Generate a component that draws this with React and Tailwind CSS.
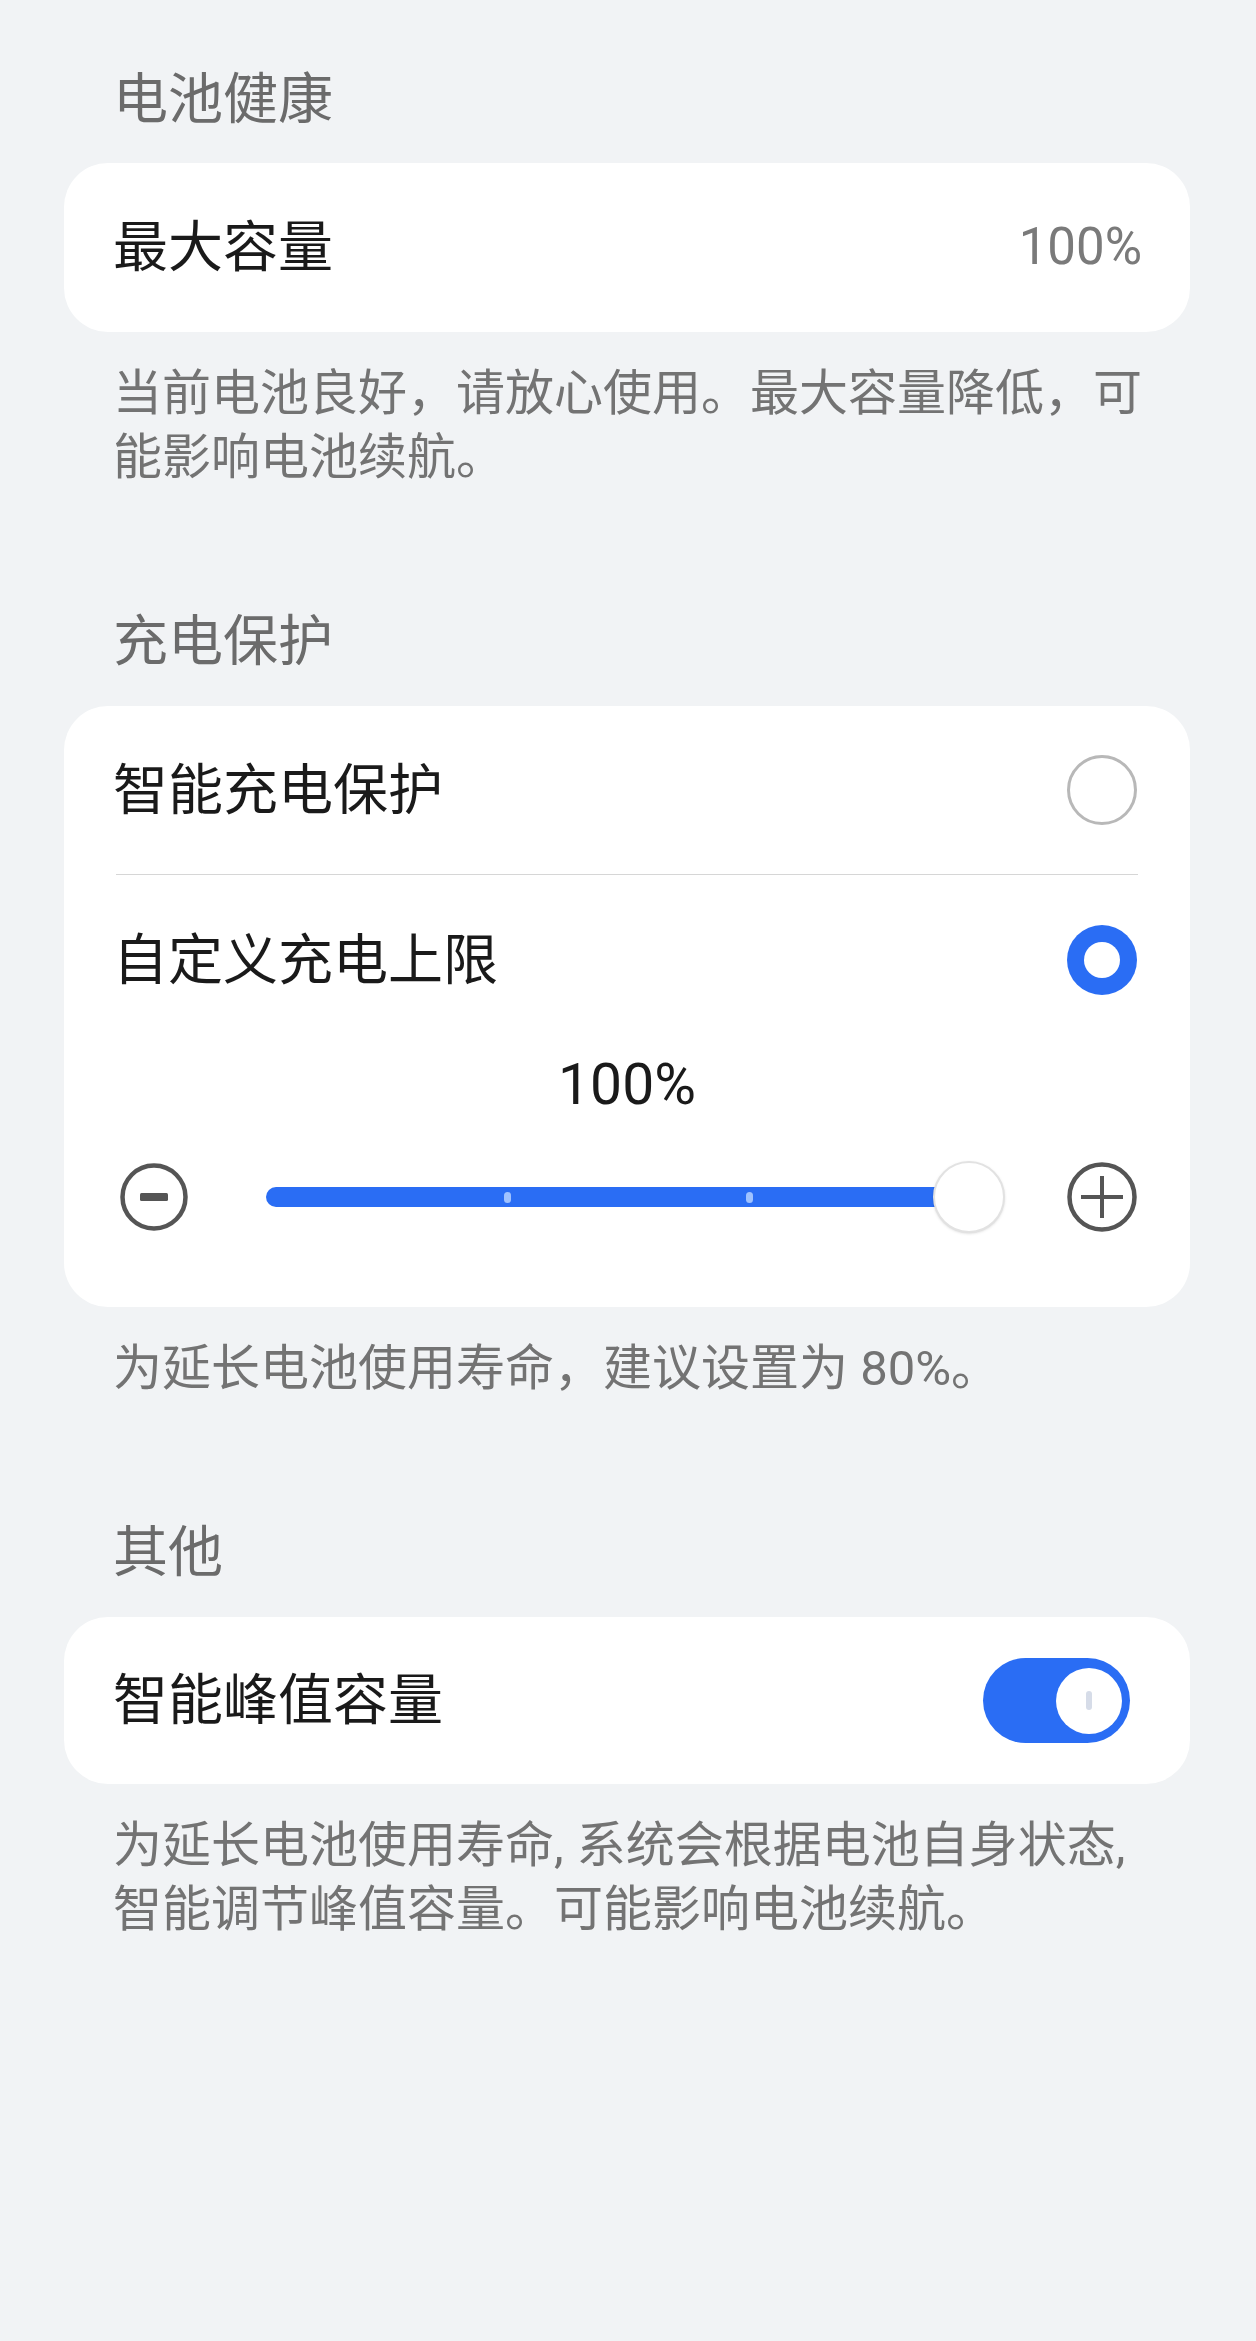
import React from 'react';

const FONT = { fontFamily: 'Roboto, "Noto Sans CJK SC", sans-serif' };

function SectionHeader({ children, className = '' }) {
  return (
    <div className={`h-[82px] flex items-center pl-[49px] text-[55px] text-[#6b6b6b] ${className}`}>
      {children}
    </div>
  );
}

function Note({ children }) {
  return (
    <div className="mt-[30px] pl-[49px] text-[49px] leading-[64px] text-[#737373]">
      {children}
    </div>
  );
}

function Comma() {
  return <span className="pr-[13px]">,</span>;
}

function Radio({ checked }) {
  if (checked) {
    return (
      <div className="w-[70px] h-[70px] rounded-full bg-[#2a6df4] flex items-center justify-center">
        <div className="w-[36px] h-[36px] rounded-full bg-white" />
      </div>
    );
  }
  return <div className="w-[70px] h-[70px] rounded-full border-[3px] border-[#b8b8b8]" />;
}

function MinusIcon() {
  return (
    <svg width="68" height="68" viewBox="0 0 68 68">
      <circle cx="34" cy="34" r="31.5" fill="none" stroke="#555" strokeWidth="4.5" />
      <rect x="20" y="30" width="28" height="8" rx="1.5" fill="#555" />
    </svg>
  );
}

function PlusIcon() {
  return (
    <svg width="70" height="70" viewBox="0 0 70 70">
      <circle cx="35" cy="35" r="32.5" fill="none" stroke="#555" strokeWidth="4.5" />
      <path d="M35 14 V56 M14 35 H56" stroke="#555" strokeWidth="4" />
    </svg>
  );
}

export default function App() {
  return (
    <div style={FONT} className="min-h-[2341px] w-[1256px] bg-[#f1f3f5] pt-[58px] pl-[64px]">
      <div className="w-[1126px]">
        {/* 电池健康 */}
        <SectionHeader>电池健康</SectionHeader>
        <div className="mt-[23px] h-[169px] bg-white rounded-[44px] flex items-center justify-between pl-[49px] pr-[48px]">
          <span className="text-[55px] text-[#1a1a1a]">最大容量</span>
          <span className="text-[51px] text-[#7a7a7a]">100%</span>
        </div>
        <Note>
          <div className="whitespace-nowrap">当前电池良好，请放心使用。最大容量降低，可</div>
          <div className="whitespace-nowrap">能影响电池续航。</div>
        </Note>

        {/* 充电保护 */}
        <SectionHeader className="mt-[110px]">充电保护</SectionHeader>
        <div className="mt-[24px] bg-white rounded-[44px] pb-[70px]">
          <div className="h-[168px] flex items-center justify-between pl-[49px] pr-[53px]">
            <span className="text-[55px] text-[#1a1a1a]">智能充电保护</span>
            <Radio checked={false} />
          </div>
          <div className="mx-[52px] h-px bg-[#d6d6d6]" />
          <div className="h-[170px] flex items-center justify-between pl-[49px] pr-[53px]">
            <span className="text-[55px] text-[#1a1a1a]">自定义充电上限</span>
            <Radio checked />
          </div>
          <div className="h-[80px] flex items-center justify-center text-[57px] text-[#1a1a1a]">100%</div>
          <div className="mt-[32px] h-[80px] flex items-center pl-[56px] pr-[53px]">
            <MinusIcon />
            <div className="ml-[78px] relative w-[703px] h-[20px] rounded-full bg-[#2a6df4]">
              <div className="absolute left-[238px] top-[5px] w-[7px] h-[11px] rounded-full bg-[#9fc2ff]" />
              <div className="absolute left-[480px] top-[5px] w-[7px] h-[11px] rounded-full bg-[#9fc2ff]" />
              <div className="absolute right-[-36px] top-[-26px] w-[72px] h-[72px] rounded-full bg-white border-2 border-[#e2e2e2] shadow-sm" />
            </div>
            <div className="ml-auto">
              <PlusIcon />
            </div>
          </div>
        </div>
        <Note>
          <div className="whitespace-nowrap">为延长电池使用寿命，建议设置为 80%。</div>
        </Note>

        {/* 其他 */}
        <SectionHeader className="mt-[110px]">其他</SectionHeader>
        <div className="mt-[24px] h-[167px] bg-white rounded-[44px] flex items-center justify-between pl-[49px] pr-[60px]">
          <span className="text-[55px] text-[#1a1a1a]">智能峰值容量</span>
          <div className="w-[147px] h-[85px] rounded-full bg-[#2a6df4] flex items-center justify-end pr-[8px]">
            <div className="w-[66px] h-[66px] rounded-full bg-white flex items-center justify-center">
              <div className="w-[6px] h-[19px] rounded-full bg-[#d6dce8]" />
            </div>
          </div>
        </div>
        <Note>
          <div className="whitespace-nowrap">
            为延长电池使用寿命<Comma />系统会根据电池自身状态<Comma />
          </div>
          <div className="whitespace-nowrap">智能调节峰值容量。可能影响电池续航。</div>
        </Note>
      </div>
    </div>
  );
}
